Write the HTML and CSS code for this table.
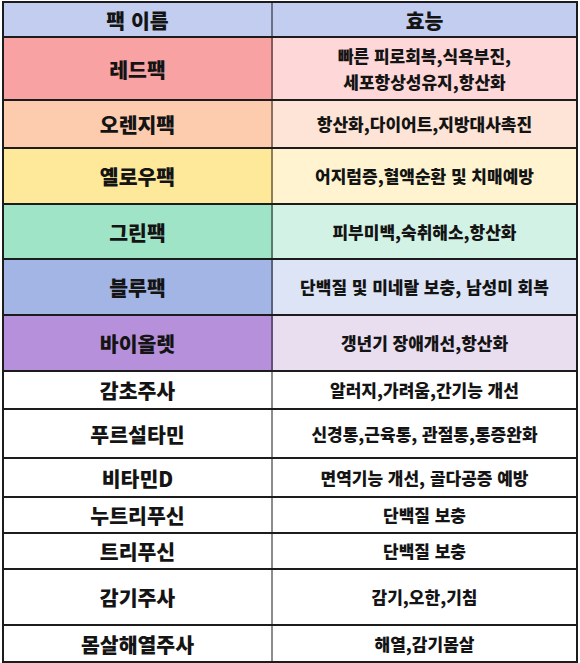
FILE: index.html
```html
<!DOCTYPE html>
<html lang="ko">
<head>
<meta charset="utf-8">
<link rel="stylesheet" href="styles.css">
</head>
<body>
<div class="table">
  <div class="row h35 head"><div class="cell name">팩 이름</div><div class="cell effect big">효능</div></div>
  <div class="row h63 red"><div class="cell name">레드팩</div><div class="cell effect two">빠른 피로회복,식욕부진,<br>세포항상성유지,항산화</div></div>
  <div class="row h48 orange"><div class="cell name">오렌지팩</div><div class="cell effect">항산화,다이어트,지방대사촉진</div></div>
  <div class="row h56 yellow"><div class="cell name">옐로우팩</div><div class="cell effect">어지럼증,혈액순환 및 치매예방</div></div>
  <div class="row h55 green"><div class="cell name">그린팩</div><div class="cell effect">피부미백,숙취해소,항산화</div></div>
  <div class="row h56 blue"><div class="cell name">블루팩</div><div class="cell effect">단백질 및 미네랄 보충, 남성미 회복</div></div>
  <div class="row h56 violet"><div class="cell name">바이올렛</div><div class="cell effect">갱년기 장애개선,항산화</div></div>
  <div class="row h38"><div class="cell name">감초주사</div><div class="cell effect">알러지,가려움,간기능 개선</div></div>
  <div class="row h49"><div class="cell name">푸르설타민</div><div class="cell effect">신경통,근육통, 관절통,통증완화</div></div>
  <div class="row h39"><div class="cell name">비타민D</div><div class="cell effect">면역기능 개선, 골다공증 예방</div></div>
  <div class="row h36"><div class="cell name">누트리푸신</div><div class="cell effect">단백질 보충</div></div>
  <div class="row h36"><div class="cell name">트리푸신</div><div class="cell effect">단백질 보충</div></div>
  <div class="row h56"><div class="cell name">감기주사</div><div class="cell effect">감기,오한,기침</div></div>
  <div class="row h35 last"><div class="cell name">몸살해열주사</div><div class="cell effect">해열,감기몸살</div></div>
</div>
</body>
</html>
```

FILE: styles.css
```css
html, body {
  margin: 0;
  padding: 0;
  background: #ffffff;
}
body {
  font-family: "Noto Sans CJK KR", "Noto Sans", sans-serif;
  font-weight: 900;
  color: #141414;
}
.table {
  margin: 1px 2px 0 2px;
  border: 2px solid #1c1c1c;
  display: flex;
  flex-direction: column;
}
.row {
  display: grid;
  grid-template-columns: 269px 1fr;
  box-sizing: border-box;
  border-bottom: 2px solid #1c1c1c;
  background: #ffffff;
}
.row.last { border-bottom: none; }
.cell {
  display: flex;
  align-items: center;
  justify-content: center;
  text-align: center;
}
.name {
  font-size: 20.5px;
  line-height: 24px;
  border-right: 2px solid rgba(0, 0, 0, 0.45);
}
.effect {
  font-size: 17px;
  line-height: 24px;
}
.effect.two { line-height: 26px; }
.effect.big { font-size: 20.5px; }

.h35 { height: 35px; }
.h36 { height: 36px; }
.h38 { height: 38px; }
.h39 { height: 39px; }
.h48 { height: 48px; }
.h49 { height: 49px; }
.h55 { height: 55px; }
.h56 { height: 56px; }
.h63 { height: 63px; }

.head .name, .head .effect { background: #c3cdef; }
.red .name { background: #f8a2a3; }
.red .effect { background: #fed7d8; }
.orange .name { background: #fdcbae; }
.orange .effect { background: #fee4d6; }
.yellow .name { background: #fde999; }
.yellow .effect { background: #fff4cf; }
.green .name { background: #9fe4c7; }
.green .effect { background: #d3f2e6; }
.blue .name { background: #a2b5e5; }
.blue .effect { background: #dde4f6; }
.violet .name { background: #b690db; }
.violet .effect { background: #e9ddf0; }
```
